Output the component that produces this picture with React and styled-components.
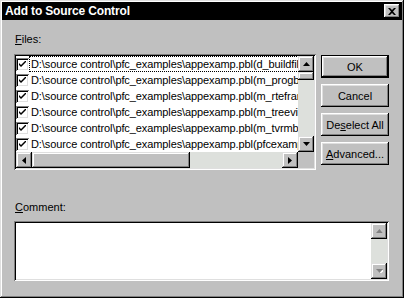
import React from "react";
import styled, { createGlobalStyle } from "styled-components";

const GlobalStyle = createGlobalStyle`
  html, body { margin: 0; padding: 0; background: #c0c0c0; }
  body { font-family: "Liberation Sans", Arial, sans-serif; font-size: 11px; }
  * { box-sizing: border-box; }
`;

const files = [
  "d_buildfile",
  "m_progbar",
  "m_rteframe",
  "m_treeview",
  "m_tvrmbutton",
  "pfcexample",
];

function Arrow({ dir, disabled }) {
  const pts = {
    up: "0,4 7,4 3.5,0",
    down: "0,0 7,0 3.5,4",
    left: "4,0 4,7 0,3.5",
    right: "0,0 0,7 4,3.5",
  }[dir];
  const vertical = dir === "up" || dir === "down";
  return (
    <svg width={vertical ? 7 : 4} height={vertical ? 4 : 7} viewBox={vertical ? "0 0 7 4" : "0 0 4 7"}>
      {disabled && (
        <polygon points={pts} fill="#fff" transform="translate(1,1)" />
      )}
      <polygon points={pts} fill={disabled ? "#808080" : "#000"} />
    </svg>
  );
}

function Dialog() {
  return (
    <Window>
      <TitleBar>
        <Title>Add to Source Control</Title>
        <CloseButton>
          <svg width="8" height="7" viewBox="0 0 8 7">
            <path d="M0 0h2l2 2 2-2h2L5 3.5 8 7H6L4 5 2 7H0l3-3.5z" fill="#000" />
          </svg>
        </CloseButton>
      </TitleBar>
      <Body>
        <TopRow>
          <FilesColumn>
            <Label><u>F</u>iles:</Label>
            <ListBox>
              <ListInner>
                <Rows>
                  {files.map((f, i) => (
                    <Row key={f}>
                      <Check>
                        <svg width="7" height="7" viewBox="0 0 7 7">
                          <path d="M0 2l2 2 5-5v2L2 6 0 4z" fill="#000" />
                        </svg>
                      </Check>
                      <RowText $focused={i === 0}>
                        D:\source control\pfc_examples\appexamp.pbl({f})
                      </RowText>
                    </Row>
                  ))}
                </Rows>
                <VScroll>
                  <ScrollBtn><Arrow dir="up" /></ScrollBtn>
                  <Thumb />
                  <Track />
                  <ScrollBtn><Arrow dir="down" /></ScrollBtn>
                </VScroll>
                <HScroll>
                  <ScrollBtn><Arrow dir="left" /></ScrollBtn>
                  <HThumb />
                  <Track />
                  <ScrollBtn><Arrow dir="right" /></ScrollBtn>
                </HScroll>
                <Corner />
              </ListInner>
            </ListBox>
          </FilesColumn>
          <Buttons>
            <Button $default>OK</Button>
            <Button>Cancel</Button>
            <Button>De<u>s</u>elect All</Button>
            <Button><u>A</u>dvanced...</Button>
          </Buttons>
        </TopRow>
        <Label $comment><u>C</u>omment:</Label>
        <CommentBox>
          <CommentText />
          <CommentScroll>
            <ScrollBtn><Arrow dir="up" disabled /></ScrollBtn>
            <Track />
            <ScrollBtn><Arrow dir="down" disabled /></ScrollBtn>
          </CommentScroll>
        </CommentBox>
      </Body>
    </Window>
  );
}

const Window = styled.div`
  width: 404px;
  height: 298px;
  background: #c0c0c0;
  padding: 2px;
  box-shadow: inset -1px -1px #000, inset 1px 1px #dfdfdf,
    inset -2px -2px #808080, inset 2px 2px #fff;
  display: flex;
  flex-direction: column;
`;

const TitleBar = styled.div`
  height: 18px;
  background: #000;
  display: flex;
  align-items: center;
  justify-content: space-between;
  padding: 0 2px 0 3px;
`;

const Title = styled.div`
  color: #fff;
  font-weight: bold;
  font-size: 12px;
  letter-spacing: -0.15px;
`;

const CloseButton = styled.div`
  width: 16px;
  height: 14px;
  background: #c0c0c0;
  display: flex;
  align-items: center;
  justify-content: center;
  box-shadow: inset -1px -1px #000, inset 1px 1px #fff,
    inset -2px -2px #808080, inset 2px 2px #dfdfdf;
`;

const Body = styled.div`
  flex: 1;
  padding: 12px 0 0 12px;
  display: flex;
  flex-direction: column;
`;

const TopRow = styled.div`
  display: flex;
  align-items: flex-start;
  gap: 5px;
`;

const FilesColumn = styled.div`
  display: flex;
  flex-direction: column;
`;

const Label = styled.div`
  height: 14px;
  line-height: 14px;
  padding-left: 1px;
  margin-top: ${(p) => (p.$comment ? "30px" : "0")};
  margin-bottom: ${(p) => (p.$comment ? "7px" : "8px")};
  color: #000;
  u { text-decoration-thickness: 1px; text-underline-offset: 1px; }
`;

const Sunken = styled.div`
  padding: 2px;
  background: #fff;
  box-shadow: inset 1px 1px #808080, inset -1px -1px #fff,
    inset 2px 2px #000, inset -2px -2px #dfdfdf;
`;

const ListBox = styled(Sunken)`
  width: 302px;
  height: 116px;
`;

const ListInner = styled.div`
  display: grid;
  grid-template-columns: 282px 16px;
  grid-template-rows: 96px 16px;
  height: 112px;
`;

const Rows = styled.div`
  overflow: hidden;
  white-space: nowrap;
`;

const Row = styled.div`
  height: 16px;
  display: flex;
  align-items: center;
`;

const Check = styled.div`
  flex: none;
  width: 13px;
  height: 13px;
  background: #fff;
  display: flex;
  align-items: center;
  justify-content: center;
  box-shadow: inset 1px 1px #808080, inset -1px -1px #fff,
    inset 2px 2px #000, inset -2px -2px #dfdfdf;
`;

const RowText = styled.div`
  height: 16px;
  line-height: 14px;
  padding: 0 1px;
  letter-spacing: -0.1px;
  border: 1px dotted ${(p) => (p.$focused ? "#000" : "transparent")};
  color: #000;
`;

const ScrollBtn = styled.div`
  flex: none;
  width: 16px;
  height: 16px;
  background: #c0c0c0;
  display: flex;
  align-items: center;
  justify-content: center;
  box-shadow: inset -1px -1px #000, inset 1px 1px #dfdfdf,
    inset -2px -2px #808080, inset 2px 2px #fff;
`;

const Track = styled.div`
  flex: 1;
  background: #dde0dc;
`;

const Thumb = styled.div`
  flex: none;
  height: 8px;
  background: #c0c0c0;
  box-shadow: inset -1px -1px #000, inset 1px 1px #dfdfdf,
    inset -2px -2px #808080, inset 2px 2px #fff;
`;

const HThumb = styled(Thumb)`
  height: auto;
  width: 158px;
`;

const VScroll = styled.div`
  display: flex;
  flex-direction: column;
`;

const HScroll = styled.div`
  display: flex;
`;

const Corner = styled.div`
  background: #c0c0c0;
`;

const Buttons = styled.div`
  margin-top: 23px;
  display: flex;
  flex-direction: column;
  gap: 6px;
`;

const Button = styled.div`
  width: 68px;
  height: 23px;
  display: flex;
  align-items: center;
  justify-content: center;
  background: #c0c0c0;
  color: #000;
  font-size: 11px;
  box-shadow: ${(p) =>
    p.$default
      ? "inset 0 0 0 1px #000, inset -2px -2px #000, inset 2px 2px #fff, inset -3px -3px #808080, inset 3px 3px #dfdfdf"
      : "inset -1px -1px #000, inset 1px 1px #fff, inset -2px -2px #808080, inset 2px 2px #dfdfdf"};
  u { text-decoration-thickness: 1px; text-underline-offset: 1px; }
`;

const CommentBox = styled(Sunken)`
  width: 375px;
  height: 60px;
  display: flex;
`;

const CommentText = styled.div`
  flex: 1;
`;

const CommentScroll = styled.div`
  width: 16px;
  display: flex;
  flex-direction: column;
`;

export default function App() {
  return (
    <>
      <GlobalStyle />
      <Dialog />
    </>
  );
}
